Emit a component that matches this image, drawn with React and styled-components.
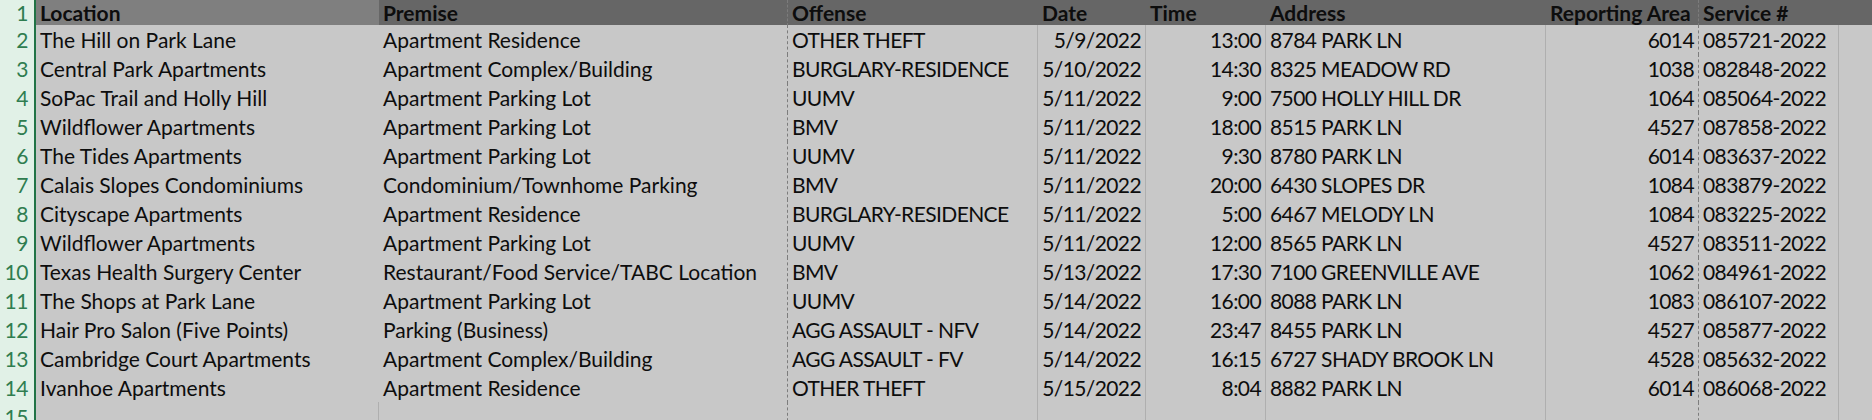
import styled, { createGlobalStyle } from 'styled-components'

const GlobalStyle = createGlobalStyle`
  html, body {
    margin: 0;
    padding: 0;
    background: #c8c8c8;
    overflow: hidden;
  }
  #root {
    width: 1872px;
    height: 420px;
    overflow: hidden;
  }
`

const columns = [
  { key: 'location', width: '345px', right: 'none' },
  { key: 'premise', width: '409px', right: 'dashed' },
  { key: 'offense', width: '250px', right: 'solid', tight: true },
  { key: 'date', width: '108px', right: 'solid', align: 'right', tight: true },
  { key: 'time', width: '120px', right: 'solid', align: 'right', tight: true },
  { key: 'address', width: '280px', right: 'solid', tight: true },
  { key: 'area', width: '153px', right: 'dashed', align: 'right', tight: true },
  { key: 'service', width: '140px', right: 'solid', tight: true },
  { key: 'extra', width: '1fr', right: 'none' },
]

const headers = ['Location', 'Premise', 'Offense', 'Date', 'Time', 'Address', 'Reporting Area', 'Service #', '']

const rows = [
  ['The Hill on Park Lane', 'Apartment Residence', 'OTHER THEFT', '5/9/2022', '13:00', '8784 PARK LN', '6014', '085721-2022'],
  ['Central Park Apartments', 'Apartment Complex/Building', 'BURGLARY-RESIDENCE', '5/10/2022', '14:30', '8325 MEADOW RD', '1038', '082848-2022'],
  ['SoPac Trail and Holly Hill', 'Apartment Parking Lot', 'UUMV', '5/11/2022', '9:00', '7500 HOLLY HILL DR', '1064', '085064-2022'],
  ['Wildflower Apartments', 'Apartment Parking Lot', 'BMV', '5/11/2022', '18:00', '8515 PARK LN', '4527', '087858-2022'],
  ['The Tides Apartments', 'Apartment Parking Lot', 'UUMV', '5/11/2022', '9:30', '8780 PARK LN', '6014', '083637-2022'],
  ['Calais Slopes Condominiums', 'Condominium/Townhome Parking', 'BMV', '5/11/2022', '20:00', '6430 SLOPES DR', '1084', '083879-2022'],
  ['Cityscape Apartments', 'Apartment Residence', 'BURGLARY-RESIDENCE', '5/11/2022', '5:00', '6467 MELODY LN', '1084', '083225-2022'],
  ['Wildflower Apartments', 'Apartment Parking Lot', 'UUMV', '5/11/2022', '12:00', '8565 PARK LN', '4527', '083511-2022'],
  ['Texas Health Surgery Center', 'Restaurant/Food Service/TABC Location', 'BMV', '5/13/2022', '17:30', '7100 GREENVILLE AVE', '1062', '084961-2022'],
  ['The Shops at Park Lane', 'Apartment Parking Lot', 'UUMV', '5/14/2022', '16:00', '8088 PARK LN', '1083', '086107-2022'],
  ['Hair Pro Salon (Five Points)', 'Parking (Business)', 'AGG ASSAULT - NFV', '5/14/2022', '23:47', '8455 PARK LN', '4527', '085877-2022'],
  ['Cambridge Court Apartments', 'Apartment Complex/Building', 'AGG ASSAULT - FV', '5/14/2022', '16:15', '6727 SHADY BROOK LN', '4528', '085632-2022'],
  ['Ivanhoe Apartments', 'Apartment Residence', 'OTHER THEFT', '5/15/2022', '8:04', '8882 PARK LN', '6014', '086068-2022'],
]

const template = `34px ${columns.map((c) => c.width).join(' ')}`

const Sheet = styled.div`
  display: flex;
  flex-direction: column;
  font-family: Lato, 'Liberation Sans', sans-serif;
  font-size: 21px;
  color: #0d0d0d;
`

const Row = styled.div`
  display: grid;
  grid-template-columns: ${template};
  height: ${(p) => (p.$header ? '25px' : '29px')};
  line-height: ${(p) => (p.$header ? '25px' : '29px')};
  flex-shrink: 0;
`

const RowNumber = styled.div`
  box-sizing: border-box;
  background: #e1f1e7;
  color: #2f7d50;
  border-right: 2px solid #217346;
  border-bottom: 1px solid #bfd9c8;
  text-align: right;
  padding-right: 6px;
  width: 36px;
  letter-spacing: -0.4px;
`

const Cell = styled.div`
  box-sizing: border-box;
  white-space: nowrap;
  overflow: hidden;
  padding: 0 4px;
  text-align: ${(p) => p.$align || 'left'};
  letter-spacing: ${(p) => (p.$tight && !p.$header ? '-0.6px' : '0')};
  background: ${(p) => (p.$header ? (p.$first ? '#7f7f7f' : '#666666') : '#c8c8c8')};
  font-weight: ${(p) => (p.$header ? 700 : 400)};
  border-bottom: ${(p) => (p.$header || p.$first ? 'none' : '1px solid #afafaf')};
  border-right: ${(p) =>
    p.$right === 'dashed'
      ? '1px dashed #7c7c7c'
      : p.$right === 'solid' && !p.$header
        ? '1px solid #afafaf'
        : 'none'};
`

const FirstCol = styled(Cell)`
  margin-left: 2px;
`

function SheetRow({ num, values, header, blank }) {
  return (
    <Row $header={header}>
      <RowNumber>{num}</RowNumber>
      {columns.map((c, i) => {
        const Comp = i === 0 ? FirstCol : Cell
        return (
          <Comp
            key={c.key}
            $header={header}
            $first={i === 0}
            $tight={c.tight}
            $align={header ? 'left' : c.align}
            $right={blank && i === 0 ? 'solid' : c.right}
          >
            {values[i] || ''}
          </Comp>
        )
      })}
    </Row>
  )
}

export default function App() {
  return (
    <>
      <GlobalStyle />
      <Sheet>
        <SheetRow num={1} values={headers} header />
        {rows.map((r, i) => (
          <SheetRow key={i} num={i + 2} values={r} />
        ))}
        <SheetRow num={15} values={[]} blank />
      </Sheet>
    </>
  )
}
